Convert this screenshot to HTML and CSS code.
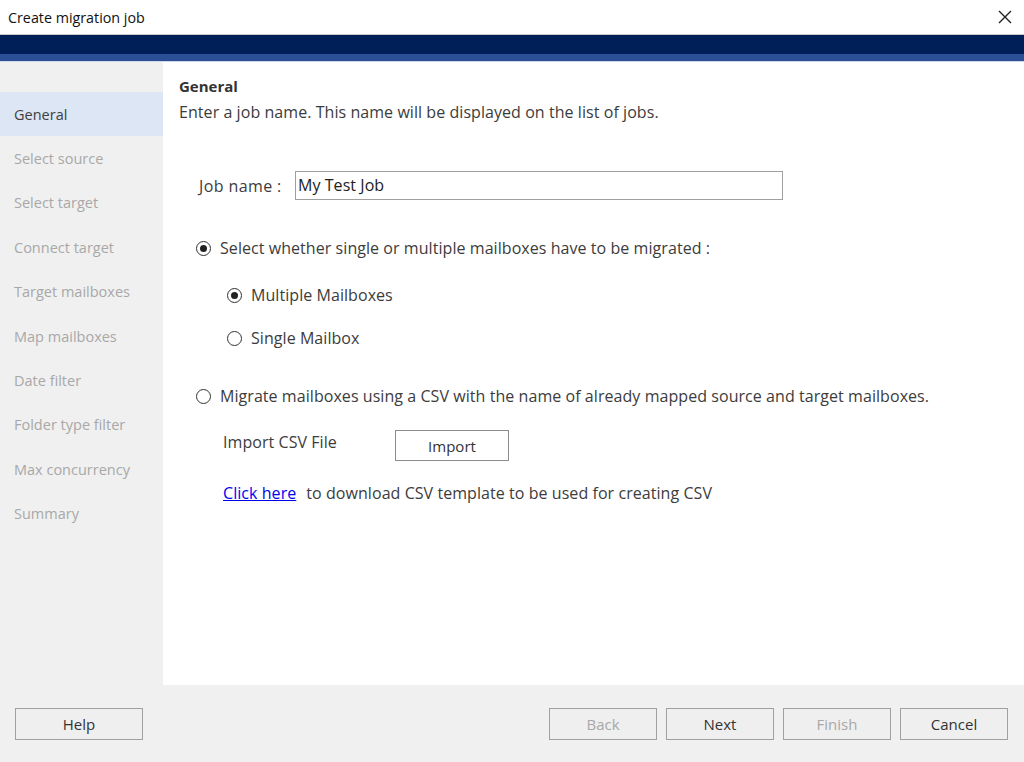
FILE: index.html
```html
<!DOCTYPE html>
<html>
<head>
<meta charset="utf-8">
<link rel="stylesheet" href="styles.css">
</head>
<body>
<div class="window">
  <div class="titlebar">
    <span class="title">Create migration job</span>
    <svg class="close" width="16" height="16" viewBox="0 0 16 16"><path d="M2 2 L14 14 M14 2 L2 14" stroke="#222" stroke-width="1.4" fill="none"/></svg>
  </div>
  <div class="band-navy"></div>
  <div class="band-blue"></div>
  <div class="main">
    <nav class="sidebar">
      <div class="step active">General</div>
      <div class="step">Select source</div>
      <div class="step">Select target</div>
      <div class="step">Connect target</div>
      <div class="step">Target mailboxes</div>
      <div class="step">Map mailboxes</div>
      <div class="step">Date filter</div>
      <div class="step">Folder type filter</div>
      <div class="step">Max concurrency</div>
      <div class="step">Summary</div>
    </nav>
    <section class="content">
      <h1 class="heading">General</h1>
      <p class="desc">Enter a job name. This name will be displayed on the list of jobs.</p>
      <div class="jobrow">
        <label class="joblabel">Job name :</label>
        <div class="input">My Test Job</div>
      </div>
      <div class="radio r-top"><span class="dot on"></span><span>Select whether single or multiple mailboxes have to be migrated :</span></div>
      <div class="radio r-sub1"><span class="dot on"></span><span>Multiple Mailboxes</span></div>
      <div class="radio r-sub2"><span class="dot"></span><span>Single Mailbox</span></div>
      <div class="radio r-csv"><span class="dot"></span><span>Migrate mailboxes using a CSV with the name of already mapped source and target mailboxes.</span></div>
      <div class="importrow">
        <span class="importlabel">Import CSV File</span>
        <div class="btn import">Import</div>
      </div>
      <div class="linkrow"><a class="link">Click here</a><span class="linktext">to download CSV template to be used for creating CSV</span></div>
    </section>
  </div>
  <footer class="footer">
    <div class="btn fbtn">Help</div>
    <div class="right">
      <div class="btn fbtn disabled">Back</div>
      <div class="btn fbtn">Next</div>
      <div class="btn fbtn disabled">Finish</div>
      <div class="btn fbtn">Cancel</div>
    </div>
  </footer>
</div>
</body>
</html>
```

FILE: styles.css
```css
* { box-sizing: border-box; }
html, body { margin: 0; padding: 0; }
body {
  width: 1024px;
  height: 762px;
  overflow: hidden;
  font-family: "Open Sans", "Noto Sans", sans-serif;
  color: #3c3c3c;
  background: #fff;
}
.window { display: flex; flex-direction: column; height: 762px; }
.titlebar {
  height: 35px;
  display: flex;
  align-items: center;
  justify-content: space-between;
  padding: 0 11px 0 8px;
  border-bottom: 1px solid #c8c8c8;
  background: #fff;
}
.title { font-size: 14.3px; color: #111; }
.close { display: block; }
.band-navy { height: 19px; background: #001e57; }
.band-blue { height: 8px; background: #2a4f94; border-bottom: 1px solid #cfd8e8; }
.main { display: flex; height: 623px; }
.sidebar {
  width: 163px;
  background: #f0f0f0;
  padding-top: 30px;
}
.step {
  height: 44.4px;
  display: flex;
  align-items: center;
  padding-left: 14px;
  font-size: 14.5px;
  color: #a8a8a8;
}
.step.active { background: #dce6f4; color: #404040; }
.content { flex: 1; background: #fff; padding: 14px 0 0 16px; letter-spacing: 0.06px; }
.heading { margin: 0; font-size: 15px; font-weight: 700; color: #333; line-height: 20px; letter-spacing: 0; }
.desc { margin: 6px 0 0; font-size: 16px; line-height: 20px; }
.jobrow { display: flex; align-items: center; margin: 49px 0 0 20px; }
.joblabel { font-size: 16px; width: 96px; letter-spacing: 0.4px; }
.input {
  width: 488px;
  height: 29px;
  border: 1px solid #a0a0a0;
  padding-left: 2px;
  font-size: 16px;
  line-height: 27px;
  color: #222;
}
.radio { display: flex; align-items: center; font-size: 16px; line-height: 20px; }
.dot {
  width: 15px;
  height: 15px;
  border: 1px solid #333;
  border-radius: 50%;
  margin-right: 9px;
  display: flex;
  align-items: center;
  justify-content: center;
  flex: none;
}
.dot.on::after { content: ""; width: 7px; height: 7px; border-radius: 50%; background: #222; }
.r-top { margin: 38px 0 0 17px; }
.r-sub1 { margin: 27px 0 0 48px; }
.r-sub2 { margin: 23px 0 0 48px; }
.r-csv { margin: 38px 0 0 17px; }
.importrow { display: flex; align-items: flex-start; margin: 24px 0 0 44px; }
.importlabel { font-size: 16px; width: 172px; line-height: 20px; padding-top: 2px; }
.btn {
  border: 1px solid #8c8c8c;
  display: flex;
  align-items: center;
  justify-content: center;
  font-size: 15px;
  color: #333;
  letter-spacing: 0;
}
.import { width: 114px; height: 31px; background: #fff; }
.linkrow { margin: 22px 0 0 44px; font-size: 16px; line-height: 20px; display: flex; }
.link { color: #0000ee; text-decoration: underline; }
.linktext { margin-left: 10px; }
.footer {
  flex: 1;
  background: #f0f0f0;
  display: flex;
  align-items: center;
  justify-content: space-between;
  padding: 1px 16px 0 15px;
}
.right { display: flex; gap: 9px; }
.fbtn { width: 108px; height: 32px; background: #efefef; border-color: #a0a0a0; }
.footer > .fbtn { width: 128px; }
.fbtn.disabled { color: #a8a8a8; }
```
